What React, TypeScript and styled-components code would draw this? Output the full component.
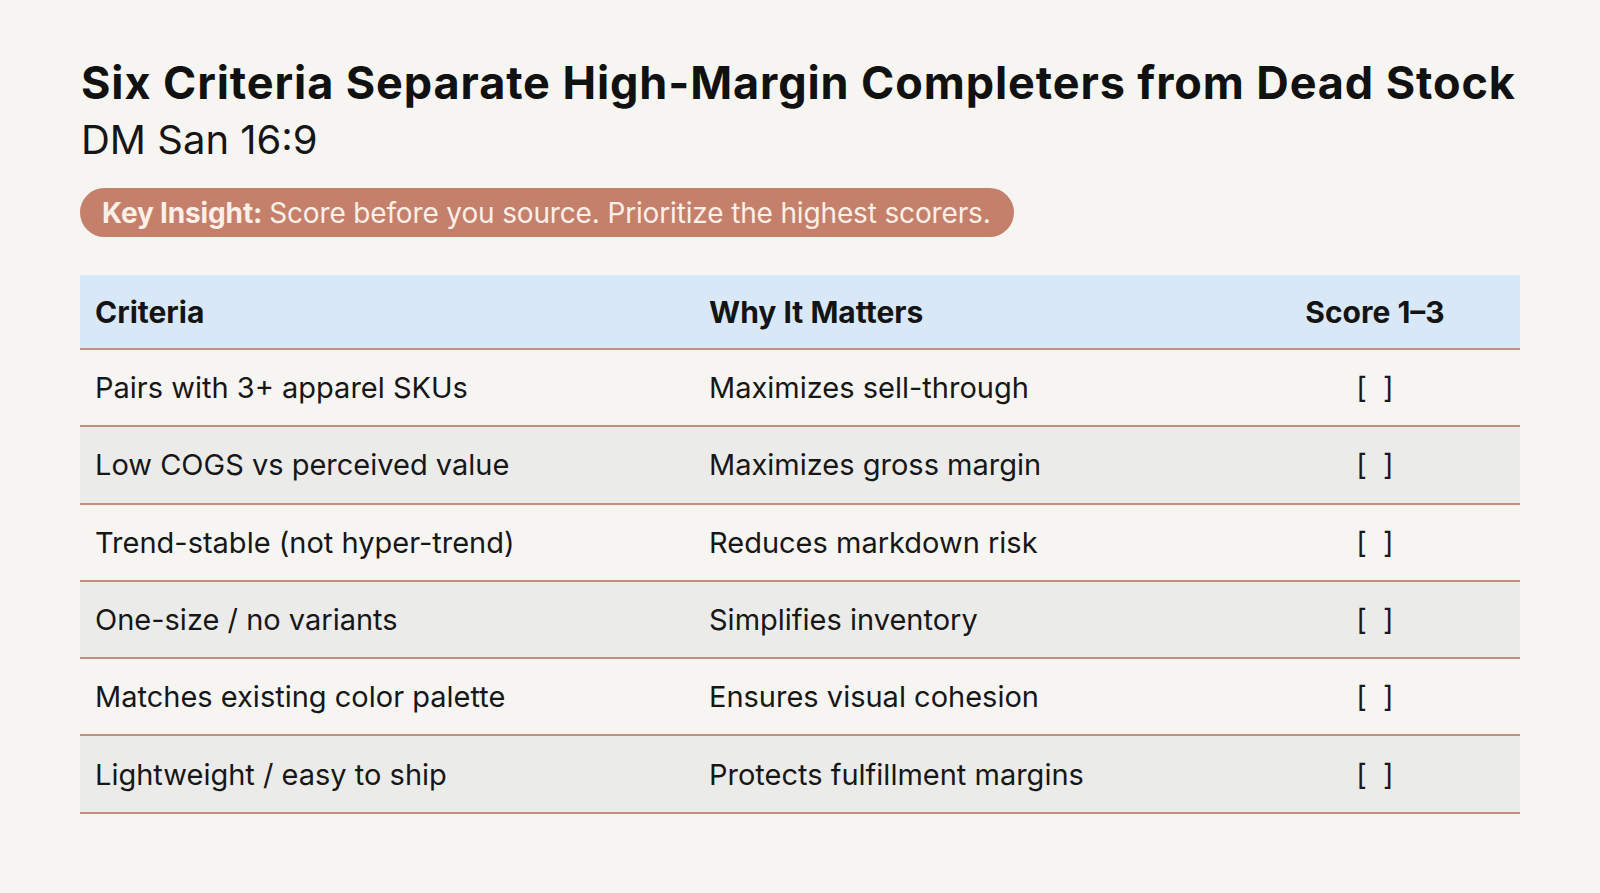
import React from "react";
import styled, { createGlobalStyle } from "styled-components";

const GlobalStyle = createGlobalStyle`
  html, body {
    margin: 0;
    padding: 0;
    background: #f6f5f2;
  }
  body {
    font-family: Inter, "Noto Sans", "Liberation Sans", sans-serif;
    color: #161616;
  }
`;

const Page = styled.main`
  width: 1600px;
  height: 893px;
  box-sizing: border-box;
  padding: 56px 80px 0 80px;
  display: flex;
  flex-direction: column;
  align-items: flex-start;
  background: #f6f5f2;
  overflow: hidden;
`;

const Title = styled.h1`
  margin: 0 0 0 1px;
  font-size: 45px;
  line-height: 53px;
  font-weight: 700;
  letter-spacing: 0.9px;
  color: #111;
  white-space: nowrap;
`;

const Subtitle = styled.h2`
  margin: 7px 0 0 1px;
  font-size: 40px;
  line-height: 48px;
  font-weight: 400;
  letter-spacing: 0;
  color: #161616;
`;

const Pill = styled.div`
  margin-top: 24px;
  height: 49px;
  box-sizing: border-box;
  padding: 0 23px 0 22px;
  display: inline-flex;
  align-items: center;
  background: #c4806a;
  border-radius: 25px;
  color: #fbefe8;
  font-size: 28px;
  letter-spacing: -0.15px;
  white-space: nowrap;
`;

const PillLabel = styled.strong`
  font-weight: 700;
  margin-right: 7px;
`;

const Table = styled.div`
  margin-top: 38px;
  width: 1440px;
  display: grid;
  grid-template-columns: 614px 536px 290px;
`;

const HeadCell = styled.div<{ $center?: boolean }>`
  height: 73px;
  background: #d8e8f6;
  border-bottom: 2px solid #c08f80;
  display: flex;
  align-items: center;
  justify-content: ${(p) => (p.$center ? "center" : "flex-start")};
  padding: 0 ${(p) => (p.$center ? "0" : "15px")};
  font-size: 30px;
  font-weight: 700;
  letter-spacing: 0;
  color: #141414;
`;

const Cell = styled.div<{ $alt?: boolean; $center?: boolean }>`
  height: 75.3px;
  background: ${(p) => (p.$alt ? "#ebebe9" : "#f6f5f2")};
  border-bottom: 2px solid #c08f80;
  display: flex;
  align-items: center;
  justify-content: ${(p) => (p.$center ? "center" : "flex-start")};
  padding: 0 ${(p) => (p.$center ? "0" : "15px")};
  font-size: 29px;
  font-weight: 400;
  letter-spacing: 0;
  color: #171717;
  white-space: nowrap;
`;

const Bracket = styled.span`
  font-size: 29px;
  letter-spacing: 4px;
  margin-right: -4px;
  color: #1a1a1a;
`;

const rows: [string, string][] = [
  ["Pairs with 3+ apparel SKUs", "Maximizes sell-through"],
  ["Low COGS vs perceived value", "Maximizes gross margin"],
  ["Trend-stable (not hyper-trend)", "Reduces markdown risk"],
  ["One-size / no variants", "Simplifies inventory"],
  ["Matches existing color palette", "Ensures visual cohesion"],
  ["Lightweight / easy to ship", "Protects fulfillment margins"],
];

export default function App() {
  return (
    <>
      <GlobalStyle />
      <Page>
        <Title>Six Criteria Separate High-Margin Completers from Dead Stock</Title>
        <Subtitle>DM San 16:9</Subtitle>
        <Pill>
          <PillLabel>Key Insight:</PillLabel>
          Score before you source. Prioritize the highest scorers.
        </Pill>
        <Table>
          <HeadCell>Criteria</HeadCell>
          <HeadCell>Why It Matters</HeadCell>
          <HeadCell $center>Score 1–3</HeadCell>
          {rows.map(([c, w], i) => (
            <React.Fragment key={c}>
              <Cell $alt={i % 2 === 1}>{c}</Cell>
              <Cell $alt={i % 2 === 1}>{w}</Cell>
              <Cell $alt={i % 2 === 1} $center>
                <Bracket>[ ]</Bracket>
              </Cell>
            </React.Fragment>
          ))}
        </Table>
      </Page>
    </>
  );
}
